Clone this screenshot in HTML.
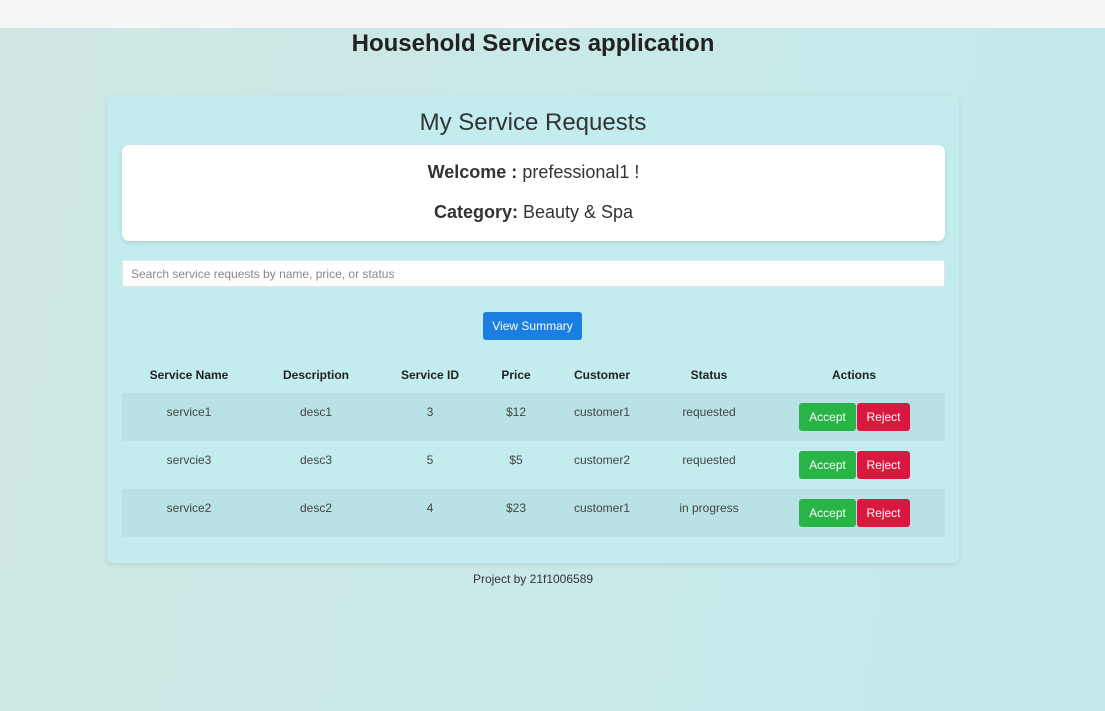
<!DOCTYPE html>
<html><head><style>
*{margin:0;padding:0;box-sizing:border-box}
body{width:1105px;height:711px;overflow:hidden;font-family:"Liberation Sans",sans-serif;background:linear-gradient(100deg,#cfe7e3 0%,#c9e9e8 50%,#c3e9ea 100%);position:relative;color:#222}
.a{position:absolute}
.top{left:0;top:0;width:1105px;height:28px;background:#f7f7f7}
h1{position:absolute;left:0;width:1066px;top:30px;text-align:center;font-size:24px;font-weight:bold;color:#222}
.card{left:107px;top:96px;width:852px;height:467px;background:#c3ecef;border-radius:6px;box-shadow:0 2px 6px rgba(0,0,0,.08)}
.t{left:107px;width:852px;top:109px;text-align:center;font-size:24px;color:#333}
.wb{left:122px;top:145px;width:823px;height:96px;background:#fff;border-radius:7px;box-shadow:0 2px 5px rgba(0,0,0,.1);text-align:center;font-size:18px;color:#333}
.in{left:122px;top:260px;width:823px;height:27px;background:#fff;border:1px solid #e4e4e4;font-size:12px;color:#888;padding:6px 8px}
.btn{left:483px;top:312px;width:99px;height:28px;background:#1a7fe0;color:#fff;font-size:12px;text-align:center;line-height:28px;border-radius:3px}
.row{left:122px;width:823px;height:48px}
.c{position:absolute;font-size:12px;text-align:center;width:120px;margin-left:-60px}
.acc,.rej{position:absolute;height:28px;line-height:28px;color:#fff;font-size:12px;text-align:center;border-radius:3px}
.acc{background:#28b446;width:57px;left:799px}
.rej{background:#d9173f;width:53px;left:857px}
.f{left:0;width:1066px;top:572px;text-align:center;font-size:12px;color:#333}
</style></head><body>
<div class="a top"></div>
<h1>Household Services application</h1>
<div class="a card"></div>
<div class="a t">My Service Requests</div>
<div class="a wb"><div style="position:absolute;top:17px;width:100%"><b>Welcome :</b> prefessional1 !</div><div style="position:absolute;top:57px;width:100%"><b>Category:</b> Beauty &amp; Spa</div></div>
<div class="a in">Search service requests by name, price, or status</div>
<div class="a btn">View Summary</div>
<div class="a row" style="top:393px;background:#b9e2e6"></div>
<div class="a row" style="top:489px;background:#b9e2e6"></div>
<div class="a" style="top:368px;left:0;width:1105px;font-weight:bold">
<div class="c" style="left:189px">Service Name</div><div class="c" style="left:316px">Description</div><div class="c" style="left:430px">Service ID</div><div class="c" style="left:516px">Price</div><div class="c" style="left:602px">Customer</div><div class="c" style="left:709px">Status</div><div class="c" style="left:854px">Actions</div></div>
<div class="a" style="top:405px;left:0;width:1105px;color:#444">
<div class="c" style="left:189px">service1</div><div class="c" style="left:316px">desc1</div><div class="c" style="left:430px">3</div><div class="c" style="left:516px">$12</div><div class="c" style="left:602px">customer1</div><div class="c" style="left:709px">requested</div></div>
<div class="a" style="top:453px;left:0;width:1105px;color:#444">
<div class="c" style="left:189px">servcie3</div><div class="c" style="left:316px">desc3</div><div class="c" style="left:430px">5</div><div class="c" style="left:516px">$5</div><div class="c" style="left:602px">customer2</div><div class="c" style="left:709px">requested</div></div>
<div class="a" style="top:501px;left:0;width:1105px;color:#444">
<div class="c" style="left:189px">service2</div><div class="c" style="left:316px">desc2</div><div class="c" style="left:430px">4</div><div class="c" style="left:516px">$23</div><div class="c" style="left:602px">customer1</div><div class="c" style="left:709px">in progress</div></div>
<div class="acc" style="top:403px">Accept</div><div class="rej" style="top:403px">Reject</div>
<div class="acc" style="top:451px">Accept</div><div class="rej" style="top:451px">Reject</div>
<div class="acc" style="top:499px">Accept</div><div class="rej" style="top:499px">Reject</div>
<div class="a f">Project by 21f1006589</div>
</body></html>
